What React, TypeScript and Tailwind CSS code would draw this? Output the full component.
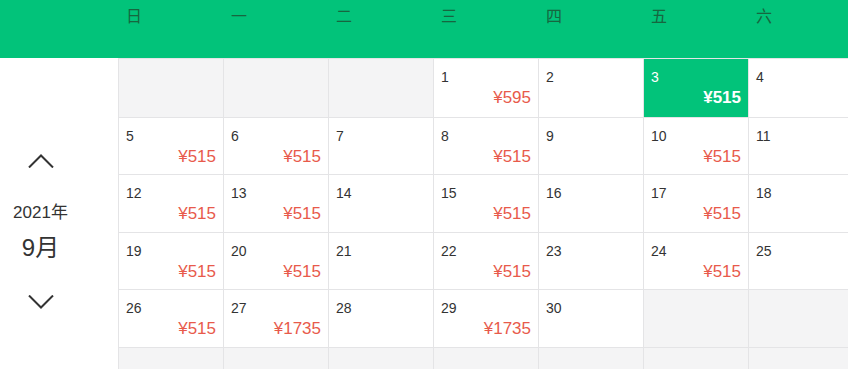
const weekDays = ["日", "一", "二", "三", "四", "五", "六"];

const prices: Record<number, string> = {
  1: "595",
  3: "515",
  5: "515",
  6: "515",
  8: "515",
  10: "515",
  12: "515",
  13: "515",
  15: "515",
  17: "515",
  19: "515",
  20: "515",
  22: "515",
  24: "515",
  26: "515",
  27: "1735",
  29: "1735",
};

const selectedDay = 3;
const firstOffset = 3;
const daysInMonth = 30;

const cells: (number | null)[] = Array.from({ length: 42 }, (_, i) => {
  const day = i - firstOffset + 1;
  return day >= 1 && day <= daysInMonth ? day : null;
});

export default function App() {
  return (
    <div
      className="w-[848px] h-[369px] overflow-hidden bg-white text-[#333]"
      style={{ fontFamily: '"Liberation Sans", "Noto Sans CJK SC", sans-serif' }}
    >
      {/* week header */}
      <div className="flex h-[58px] bg-[#02c37a]">
        <div className="w-[119px] shrink-0" />
        {weekDays.map((d) => (
          <div key={d} className="w-[105px] shrink-0 pl-[7px] pt-[6px] text-[16px] leading-[22px] text-[#17663f]">
            {d}
          </div>
        ))}
      </div>

      <div className="flex">
        {/* month switcher */}
        <div className="w-[118px] shrink-0">
          <div className="w-[81px] flex flex-col items-center pt-[96px]">
            <button className="cursor-pointer" aria-label="Previous month">
              <svg width="26" height="14" viewBox="0 0 26 14" fill="none" stroke="#333" strokeWidth={2}>
                <path d="M1 13.5L13 1.5l12 12" />
              </svg>
            </button>
            <div className="mt-[34px] text-[17px] leading-[22px]">2021年</div>
            <div className="mt-[9px] text-[24px] leading-[30px]">9月</div>
            <button className="mt-[32px] cursor-pointer" aria-label="Next month">
              <svg width="26" height="14" viewBox="0 0 26 14" fill="none" stroke="#333" strokeWidth={2}>
                <path d="M1 0.5l12 12 12-12" />
              </svg>
            </button>
          </div>
        </div>

        {/* day grid */}
        <div className="grid grid-cols-[repeat(7,105px)] grid-rows-[58.5px_repeat(5,57.5px)] border-t border-l border-[#e4e4e6] shrink-0">
          {cells.map((day, i) => {
            if (day === null) {
              return <div key={i} className="border-r border-b border-[#e4e4e6] bg-[#f4f4f5]" />;
            }
            const selected = day === selectedDay;
            const price = prices[day];
            return (
              <div
                key={i}
                className={`flex flex-col border-r border-b border-[#e4e4e6] pl-[7px] pr-2 pt-2 ${
                  selected ? "bg-[#02c37a] text-white" : "bg-white"
                }`}
              >
                <span className="text-[14px] leading-[20px]">{day}</span>
                {price && (
                  <span
                    className={`self-end -mr-[1px] text-[17px] leading-[22px] ${
                      selected ? "font-bold text-white" : "text-[#e85a4b]"
                    }`}
                  >
                    ¥{price}
                  </span>
                )}
              </div>
            );
          })}
        </div>
      </div>
    </div>
  );
}
